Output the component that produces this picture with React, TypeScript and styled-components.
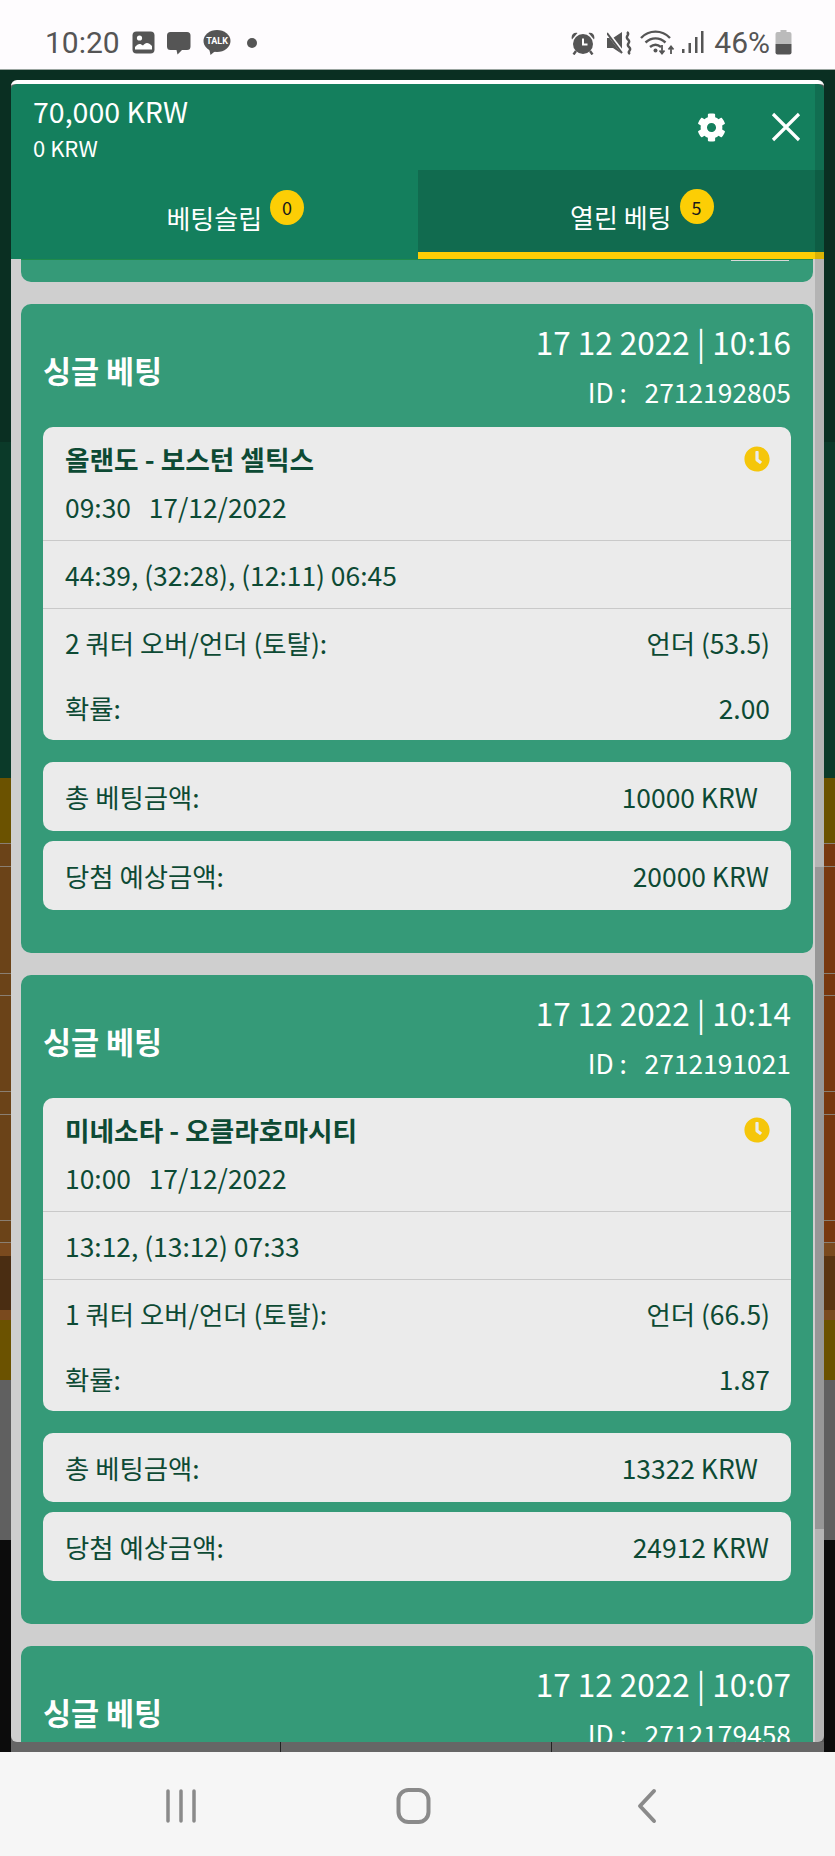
import styled, { createGlobalStyle } from 'styled-components'
import { FaClock, FaCog } from 'react-icons/fa'

interface Bet {
    id: string
    time: string
    teams: string
    start: string
    score: string
    market: string
    pick: string
    odds: string
    stake: string
    payout: string
}

const bets: Bet[] = [
    {
        id: '2712192805',
        time: '17 12 2022 | 10:16',
        teams: '올랜도 - 보스턴 셀틱스',
        start: '09:30   17/12/2022',
        score: '44:39, (32:28), (12:11) 06:45',
        market: '2 쿼터 오버/언더 (토탈):',
        pick: '언더 (53.5)',
        odds: '2.00',
        stake: '10000 KRW',
        payout: '20000 KRW',
    },
    {
        id: '2712191021',
        time: '17 12 2022 | 10:14',
        teams: '미네소타 - 오클라호마시티',
        start: '10:00   17/12/2022',
        score: '13:12, (13:12) 07:33',
        market: '1 쿼터 오버/언더 (토탈):',
        pick: '언더 (66.5)',
        odds: '1.87',
        stake: '13322 KRW',
        payout: '24912 KRW',
    },
    {
        id: '2712179458',
        time: '17 12 2022 | 10:07',
        teams: '',
        start: '',
        score: '',
        market: '',
        pick: '',
        odds: '',
        stake: '',
        payout: '',
    },
]

const BROWN_L = '#6b4318'
const BROWN_R = '#78380f'

const bands = [
    { color: '#0a2f22', height: 372 },
    { color: '#0b3a29', height: 336 },
    { color: '#6b5200', height: 65 },
    { color: BROWN_L, right: BROWN_R, height: 23, line: true },
    { color: BROWN_L, right: BROWN_R, height: 107, line: true },
    { color: BROWN_L, right: BROWN_R, height: 22, line: true },
    { color: BROWN_L, right: BROWN_R, height: 96, line: true },
    { color: BROWN_L, right: BROWN_R, height: 23, line: true },
    { color: BROWN_L, right: BROWN_R, height: 106, line: true },
    { color: BROWN_L, right: BROWN_R, height: 22, line: true },
    { color: '#7a4a1e', height: 14, line: true },
    { color: '#4a2d12', right: '#5a3512', height: 54 },
    { color: '#7a4a1e', height: 10 },
    { color: '#6b5200', height: 60 },
    { color: '#606060', height: 160 },
    { color: '#0c0c0c', height: 212 },
]

const ImageIcon = () => (
    <svg width="23" height="23" viewBox="0 0 23 23">
        <rect x="0.5" y="0.5" width="22" height="22" rx="4" fill="#555" />
        <circle cx="7.5" cy="7" r="2.6" fill="#fff" />
        <path d="M3 18.500v-2.500c3-3.500 5-4 8-1.500 2.500-3.500 5.500-3.500 9 .5v3.500z" fill="#fff" />
    </svg>
)

const ChatIcon = () => (
    <svg width="24" height="24" viewBox="0 0 24 24">
        <path d="M4 1h16a3.500 3.500 0 0 1 3.500 3.500v11a3.500 3.500 0 0 1-3.500 3.500h-5l-4.500 4.500-1-4.500h-6a3.500 3.500 0 0 1-3.500-3.500v-11a3.500 3.500 0 0 1 3.500-3.500z" fill="#555" />
    </svg>
)

const TalkIcon = () => (
    <svg width="28" height="25" viewBox="0 0 28 25">
        <ellipse cx="14" cy="11" rx="13.500" ry="11" fill="#555" />
        <path d="M6 18l1.500 7 6-5z" fill="#555" />
        <text x="14" y="14" textAnchor="middle" fontSize="9" fontWeight="700" fontFamily="Roboto, sans-serif" fill="#fff">
            TALK
        </text>
    </svg>
)

const AlarmIcon = () => (
    <svg width="24" height="24" viewBox="0 0 24 24">
        <circle cx="12" cy="13" r="10" fill="#555" />
        <path d="M1 8.500c-1.500-4 1.500-7.500 5.500-6.500zM23 8.500c1.500-4-1.500-7.500-5.500-6.500z" fill="#555" />
        <path d="M5 20l-2.500 3.500M19 20l2.500 3.500" stroke="#555" strokeWidth="2.400" />
        <path d="M12 7.500v6h4.500" fill="none" stroke="#fff" strokeWidth="2" />
    </svg>
)

const MuteIcon = () => (
    <svg width="25" height="24" viewBox="0 0 25 24">
        <path d="M0 7h6l9-6v22l-9-6h-6z" fill="#555" />
        <path d="M0 1l17 22" stroke="#fefcfe" strokeWidth="3.500" />
        <path d="M0 2l15 20" stroke="#555" strokeWidth="2" />
        <path d="M20 1c4 3-3 4 1 7.500s-3 4 1 7.500-3 4 1 7" fill="none" stroke="#555" strokeWidth="2.400" />
    </svg>
)

const WifiIcon = () => (
    <svg width="35" height="26" viewBox="0 0 35 26">
        <g fill="none" stroke="#555" strokeWidth="2.400">
            <path d="M1 8c8-8.500 21-8.500 29 0" />
            <path d="M5.500 12.500c6-5.500 14-5.500 20 0" />
            <path d="M10 17c3.500-3 7.500-3 11 0" />
            <path d="M22 15v8M19.500 20.500l2.500 3 2.500-3M31 24v-7M28.500 19.500l2.500-3 2.500 3" strokeWidth="1.800" />
        </g>
        <circle cx="15.500" cy="20.500" r="2" fill="#555" />
    </svg>
)

const SignalIcon = () => (
    <svg width="23" height="23" viewBox="0 0 23 23">
        <path d="M1 18h2.500v4h-2.500zM7.500 12h2.500v10h-2.500zM14 6h2.500v16h-2.500zM20 0h2.500v22h-2.500z" fill="#555" />
    </svg>
)

const BatteryIcon = () => (
    <svg width="17" height="25" viewBox="0 0 17 25">
        <path d="M5.500 0h6v3h-6z" fill="#bbb" />
        <path d="M2.500 2h12a2 2 0 0 1 2 2v10h-16v-10a2 2 0 0 1 2-2z" fill="#bbb" />
        <path d="M.5 14h16v8.500a2 2 0 0 1-2 2h-12a2 2 0 0 1-2-2z" fill="#555" />
    </svg>
)

const CloseIcon = () => (
    <svg width="30" height="30" viewBox="0 0 30 30">
        <path d="M2 2l26 26M28 2l-26 26" stroke="#fff" strokeWidth="3.200" fill="none" />
    </svg>
)

const MenuIcon = () => (
    <svg width="32" height="34" viewBox="0 0 32 34">
        <path d="M3 2v30M16 2v30M29 2v30" stroke="#8a8a8a" strokeWidth="3.500" strokeLinecap="round" />
    </svg>
)

const HomeIcon = () => (
    <svg width="36" height="36" viewBox="0 0 36 36">
        <rect x="2.500" y="2" width="30" height="32" rx="10" fill="none" stroke="#8a8a8a" strokeWidth="4" />
    </svg>
)

const BackIcon = () => (
    <svg width="22" height="36" viewBox="0 0 22 36">
        <path d="M18 3l-14 15 14 15" fill="none" stroke="#8a8a8a" strokeWidth="4" strokeLinecap="round" strokeLinejoin="round" />
    </svg>
)

const BetCard = ({ bet }: { bet: Bet }) => (
    <Card>
        <CardHead>
            <CardTitle>싱글 베팅</CardTitle>
            <CardMeta>
                <CardDate>{bet.time}</CardDate>
                <CardId>ID :&nbsp;&nbsp;&nbsp;{bet.id}</CardId>
            </CardMeta>
        </CardHead>
        {bet.teams && (
            <>
                <InfoBox>
                    <EventRow>
                        <EventTop>
                            <Teams>{bet.teams}</Teams>
                            <ClockMark>
                                <FaClock size={26} />
                            </ClockMark>
                        </EventTop>
                        <BodyText>{bet.start}</BodyText>
                    </EventRow>
                    <ScoreRow>
                        <BodyText>{bet.score}</BodyText>
                    </ScoreRow>
                    <MarketRows>
                        <Line>
                            <BodyText>{bet.market}</BodyText>
                            <BodyText>{bet.pick}</BodyText>
                        </Line>
                        <Line>
                            <BodyText>확률:</BodyText>
                            <BodyText>{bet.odds}</BodyText>
                        </Line>
                    </MarketRows>
                </InfoBox>
                <Totals>
                    <TotalBox $inset>
                        <BodyText>총 베팅금액:</BodyText>
                        <BodyText>{bet.stake}</BodyText>
                    </TotalBox>
                    <TotalBox>
                        <BodyText>당첨 예상금액:</BodyText>
                        <BodyText>{bet.payout}</BodyText>
                    </TotalBox>
                </Totals>
            </>
        )}
    </Card>
)

export default function App() {
    return (
        <>
            <GlobalStyle />
            <Screen>
                <StatusBar>
                    <StatusGroup>
                        <Clock>10:20</Clock>
                        <ImageIcon />
                        <ChatIcon />
                        <TalkIcon />
                        <StatusDot />
                    </StatusGroup>
                    <StatusGroup>
                        <StatusSlot $after={12}>
                            <AlarmIcon />
                        </StatusSlot>
                        <StatusSlot $after={8}>
                            <MuteIcon />
                        </StatusSlot>
                        <StatusSlot $after={6}>
                            <WifiIcon />
                        </StatusSlot>
                        <StatusSlot $after={10}>
                            <SignalIcon />
                        </StatusSlot>
                        <Percent>46%</Percent>
                        <BatteryIcon />
                    </StatusGroup>
                </StatusBar>
                <Stage>
                    <Backdrop>
                        {bands.map((band, idx) => (
                            <Band
                                key={idx}
                                $color={band.color}
                                $right={band.right ?? band.color}
                                $height={band.height}
                                $line={band.line}
                            />
                        ))}
                    </Backdrop>
                    <Panel>
                        <PanelHeader>
                            <Balances>
                                <MainBalance>70,000 KRW</MainBalance>
                                <SubBalance>0 KRW</SubBalance>
                            </Balances>
                            <HeaderActions>
                                <FaCog size={29} color="#fff" />
                                <CloseIcon />
                            </HeaderActions>
                        </PanelHeader>
                        <Tabs>
                            <Tab>
                                <TabLabel>
                                    베팅슬립
                                    <Badge>0</Badge>
                                </TabLabel>
                            </Tab>
                            <Tab $active>
                                <TabLabel>
                                    열린 베팅
                                    <Badge>5</Badge>
                                </TabLabel>
                            </Tab>
                        </Tabs>
                        <Scroller>
                            <CardStub>
                                <StubRest />
                            </CardStub>
                            {bets.map((bet) => (
                                <BetCard bet={bet} key={bet.id} />
                            ))}
                        </Scroller>
                        <PanelFoot>
                            <FootCell />
                            <FootCell />
                            <FootCell />
                        </PanelFoot>
                        <ScrollTrack>
                            <ScrollThumb />
                        </ScrollTrack>
                    </Panel>
                </Stage>
                <NavBar>
                    <NavItem>
                        <MenuIcon />
                    </NavItem>
                    <NavItem>
                        <HomeIcon />
                    </NavItem>
                    <NavItem>
                        <BackIcon />
                    </NavItem>
                </NavBar>
            </Screen>
        </>
    )
}

const GlobalStyle = createGlobalStyle`
    html, body {
        margin: 0;
        padding: 0;
        background: #fefcfe;
    }
    * {
        box-sizing: border-box;
    }
`

const Screen = styled.div`
    width: 835px;
    height: 1856px;
    display: flex;
    flex-direction: column;
    overflow: hidden;
    font-family: 'Noto Sans CJK KR', 'Noto Sans', sans-serif;
`

const StatusBar = styled.div`
    height: 70px;
    flex: none;
    display: flex;
    justify-content: space-between;
    align-items: center;
    padding: 16px 43px 0 45px;
    background: #fefcfe;
    border-bottom: 1px solid #9aa5a0;
`

const StatusGroup = styled.div`
    display: flex;
    align-items: center;
    gap: 12px;

    &:last-child {
        gap: 0;
    }
`

const StatusSlot = styled.span<{ $after: number }>`
    display: flex;
    margin-right: ${(p) => p.$after}px;
`

const Clock = styled.span`
    font-family: Roboto, sans-serif;
    font-size: 30px;
    line-height: 34px;
    color: #555;
`

const StatusDot = styled.span`
    width: 10px;
    height: 10px;
    margin-left: 4px;
    border-radius: 50%;
    background: #555;
`

const Percent = styled.span`
    font-family: Roboto, sans-serif;
    font-size: 30px;
    line-height: 34px;
    color: #555;
    margin-right: 5px;
`

const Stage = styled.div`
    position: relative;
    flex: 1;
    min-height: 0;
    display: flex;
    padding: 10px 11px 0;
    background: #0c0c0c;
`

const Backdrop = styled.div`
    position: absolute;
    inset: 0;
    display: flex;
    flex-direction: column;
`

const Band = styled.div<{ $color: string; $right: string; $height: number; $line?: boolean }>`
    flex: none;
    height: ${(p) => p.$height}px;
    background: linear-gradient(to right, ${(p) => p.$color} 50%, ${(p) => p.$right} 50%);
    border-top: ${(p) => (p.$line ? '1px solid #8a7f72' : 'none')};
`

const Panel = styled.div`
    position: relative;
    flex: 1;
    min-width: 0;
    display: flex;
    flex-direction: column;
    background: #666;
    border-top: 4px solid #fff;
    border-radius: 6px 6px 0 0;
    overflow: hidden;
`

const PanelHeader = styled.div`
    height: 86px;
    flex: none;
    display: flex;
    justify-content: space-between;
    align-items: center;
    padding: 0 23px 0 22px;
    background: #147f5d;
    color: #fff;
    border-radius: 6px 6px 0 0;
`

const Balances = styled.div`
    display: flex;
    flex-direction: column;
    gap: 2px;
`

const MainBalance = styled.div`
    font-size: 28.500px;
    line-height: 38px;
`

const SubBalance = styled.div`
    font-size: 22px;
    line-height: 30px;
`

const HeaderActions = styled.div`
    display: flex;
    align-items: center;
    gap: 45px;
`

const Tabs = styled.div`
    height: 89px;
    flex: none;
    display: grid;
    grid-template-columns: 1fr 1fr;
`

const Tab = styled.div<{ $active?: boolean }>`
    display: flex;
    justify-content: center;
    align-items: center;
    padding-top: ${(p) => (p.$active ? '12px' : '6px')};
    background: ${(p) => (p.$active ? '#116b4f' : '#147f5d')};
    border-bottom: ${(p) => (p.$active ? '7px solid #fcce05' : 'none')};
    color: #fff;
`

const TabLabel = styled.span`
    position: relative;
    font-size: 26px;
    line-height: 36px;
`

const Badge = styled.span`
    position: absolute;
    left: calc(100% + 8px);
    top: -10px;
    width: 34px;
    height: 35px;
    display: flex;
    justify-content: center;
    align-items: center;
    border-radius: 50%;
    background: #fcce05;
    color: #1a1a1a;
    font-size: 18px;
    line-height: 1;
`

const Scroller = styled.div`
    flex: 1;
    min-height: 0;
    display: flex;
    flex-direction: column;
    gap: 22px;
    padding: 0 11px 0 10px;
    overflow: hidden;
    background: #cfcfcf;
    border-radius: 0 0 6px 6px;
`

const CardStub = styled.div`
    height: 23px;
    flex: none;
    display: flex;
    justify-content: flex-end;
    align-items: flex-start;
    padding-right: 24px;
    background: #359a78;
    border-top: 1px solid #1e8a4a;
    border-radius: 0 0 10px 10px;
`

const StubRest = styled.div`
    width: 58px;
    height: 1px;
    background: #d8d8d8;
`

const Card = styled.section`
    flex: none;
    height: 649px;
    display: flex;
    flex-direction: column;
    padding: 0 22px;
    background: #359a78;
    border-radius: 10px;
`

const CardHead = styled.header`
    height: 123px;
    flex: none;
    display: flex;
    justify-content: space-between;
    align-items: center;
    color: #fff;
`

const CardTitle = styled.h2`
    margin: 9px 0 0;
    font-size: 30.500px;
    font-weight: 700;
    line-height: 40px;
`

const CardMeta = styled.div`
    display: flex;
    flex-direction: column;
    align-items: flex-end;
    gap: 13px;
    margin-top: -3px;
`

const CardDate = styled.div`
    font-size: 31.500px;
    line-height: 42px;
`

const CardId = styled.div`
    font-size: 26.400px;
    line-height: 34px;
`

const InfoBox = styled.div`
    flex: none;
    height: 313px;
    display: flex;
    flex-direction: column;
    background: #ebebeb;
    border-radius: 10px;
`

const EventRow = styled.div`
    height: 114px;
    flex: none;
    display: flex;
    flex-direction: column;
    gap: 12px;
    padding: 14px 21px 0 22px;
    border-bottom: 1px solid #c9c9c9;
`

const EventTop = styled.div`
    display: flex;
    justify-content: space-between;
    align-items: center;
`

const Teams = styled.div`
    font-size: 26.700px;
    font-weight: 700;
    line-height: 36px;
    color: #0d4a34;
`

const ClockMark = styled.span`
    display: flex;
    color: #f5c60a;
`

const BodyText = styled.span`
    font-size: 26.400px;
    line-height: 36px;
    color: #0d4a34;
    white-space: pre;
`

const ScoreRow = styled.div`
    height: 68px;
    flex: none;
    display: flex;
    align-items: center;
    padding: 0 21px 0 22px;
    border-bottom: 1px solid #c9c9c9;
`

const MarketRows = styled.div`
    display: flex;
    flex-direction: column;
    gap: 29px;
    padding: 16px 21px 0 22px;
`

const Line = styled.div`
    display: flex;
    justify-content: space-between;
    align-items: center;
`

const Totals = styled.div`
    display: flex;
    flex-direction: column;
    gap: 10px;
    margin-top: 22px;
`

const TotalBox = styled.div<{ $inset?: boolean }>`
    height: 69px;
    display: flex;
    justify-content: space-between;
    align-items: center;
    padding: 0 ${(p) => (p.$inset ? '33px' : '22px')} 0 22px;
    background: #ebebeb;
    border-radius: 10px;
`

const PanelFoot = styled.div`
    height: 10px;
    flex: none;
    display: grid;
    grid-template-columns: 270px 271px 1fr;
    background: #666;
`

const FootCell = styled.div`
    border-right: 1px solid #222;

    &:last-child {
        border-right: none;
    }
`

const ScrollTrack = styled.div`
    position: absolute;
    top: 0;
    right: 0;
    bottom: 10px;
    width: 9px;
    background: rgba(0, 0, 0, 0.13);
`

const ScrollThumb = styled.div`
    position: absolute;
    top: 783px;
    left: 0;
    right: 0;
    height: 662px;
    background: rgba(0, 0, 0, 0.16);
`

const NavBar = styled.nav`
    height: 104px;
    flex: none;
    display: grid;
    grid-template-columns: repeat(3, 233px);
    justify-content: center;
    align-items: center;
    padding: 3px 8px 0 0;
    background: #f6f6f6;
`

const NavItem = styled.div`
    display: flex;
    justify-content: center;
    align-items: center;
`
